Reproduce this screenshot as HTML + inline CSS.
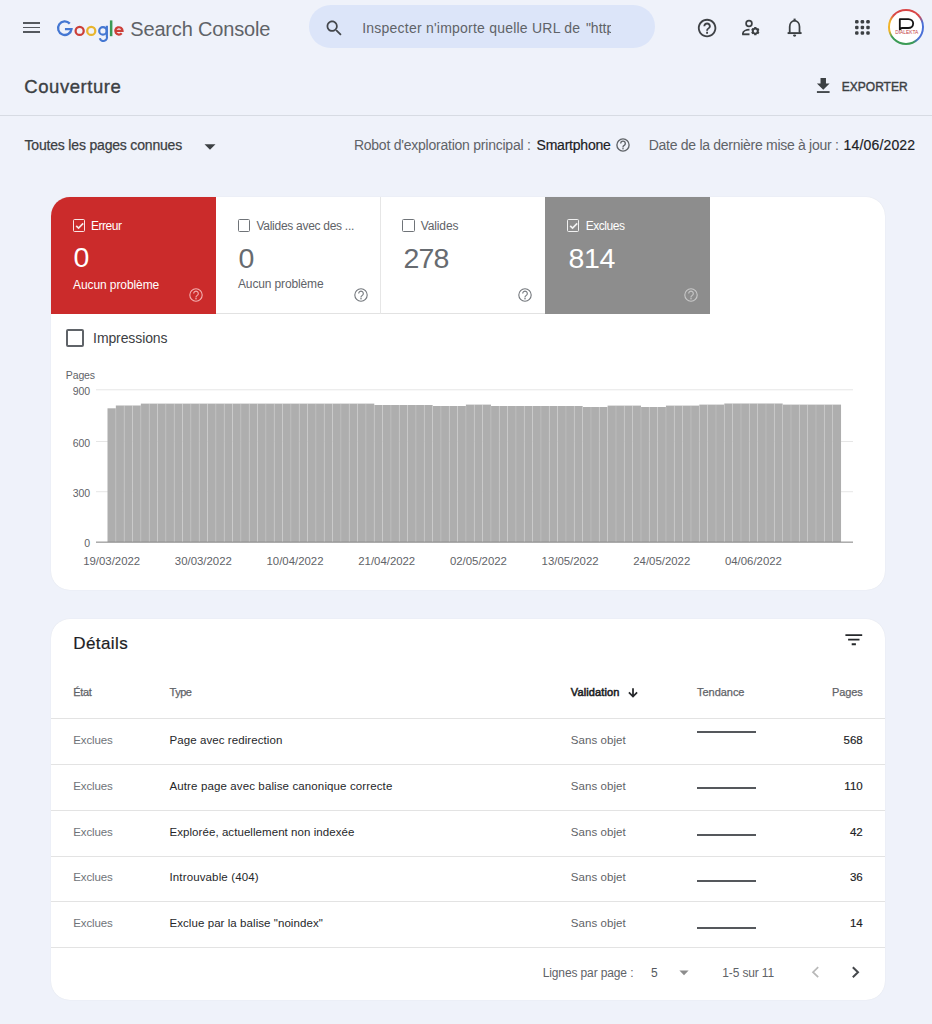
<!DOCTYPE html>
<html><head><meta charset="utf-8"><style>
html,body{margin:0;padding:0;width:932px;height:1024px;overflow:hidden;background:#eff2fa;font-family:"Liberation Sans",sans-serif;}
.a{position:absolute;}
.t{position:absolute;white-space:nowrap;line-height:1;}
.card{background:#fff;border-radius:19px;box-shadow:0 0 1px rgba(60,64,67,0.12);}
</style></head><body>
<!-- header -->
<div class="a" style="left:22.6px;top:22.2px;width:17px;height:1.7px;background:#55595e"></div>
<div class="a" style="left:22.6px;top:26.6px;width:17px;height:1.7px;background:#55595e"></div>
<div class="a" style="left:22.6px;top:31px;width:17px;height:1.7px;background:#55595e"></div>
<svg class="a" style="left:0;top:0" width="130" height="50" viewBox="0 0 130 50" fill="none">
<path d="M69.77 23.63A6.75 6.75 0 1 0 71.50 29.05H64.95" stroke="#4477d2" stroke-width="2.3"/>
<circle cx="79.65" cy="30.9" r="4.05" stroke="#cc3f38" stroke-width="2.25"/>
<circle cx="91.25" cy="30.9" r="4.05" stroke="#e8b52d" stroke-width="2.25"/>
<circle cx="102.95" cy="30.9" r="3.75" stroke="#4477d2" stroke-width="2.2"/>
<path d="M106.85 25.8V36.2A3.4 3.4 0 0 1 99.8 38.3" stroke="#4477d2" stroke-width="2.2"/>
<rect x="109.9" y="20.4" width="2.5" height="15.8" fill="#3a9a55"/>
<path d="M121.70 33.25A3.65 3.65 0 1 1 122.55 30.90H115.25" stroke="#cc3f38" stroke-width="2.2"/>
</svg>
<div class="a" style="left:308.5px;top:5.3px;width:346.5px;height:43px;border-radius:22px;background:#dce5f9"></div>
<svg class="a" style="left:324.2px;top:18.2px" width="20.6" height="20.6" viewBox="0 0 24 24"><path fill="#44474c" d="M15.5 14h-.79l-.28-.27C15.41 12.59 16 11.11 16 9.5 16 5.91 13.09 3 9.5 3S3 5.91 3 9.5 5.91 16 9.5 16c1.61 0 3.09-.59 4.23-1.57l.27.28v.79l5 4.99L20.49 19l-4.99-5zm-6 0C7.01 14 5 11.99 5 9.5S7.01 5 9.5 5 14 7.01 14 9.5 11.99 14 9.5 14z"/></svg>
<svg class="a" style="left:695.9px;top:16.7px" width="22.2" height="22.2" viewBox="0 0 24 24"><path fill="#3f4246" d="M11 18h2v-2h-2v2zm1-16C6.48 2 2 6.48 2 12s4.48 10 10 10 10-4.48 10-10S17.52 2 12 2zm0 18c-4.41 0-8-3.59-8-8s3.59-8 8-8 8 3.59 8 8-3.59 8-8 8zm0-14c-2.21 0-4 1.79-4 4h2c0-1.1.9-2 2-2s2 .9 2 2c0 2-3 1.75-3 5h2c0-2.25 3-2.5 3-5 0-2.21-1.79-4-4-4z"/></svg>
<svg class="a" style="left:740px;top:18px" width="22" height="20" viewBox="0 0 22 20"><circle cx="9" cy="5.5" r="2.9" fill="none" stroke="#3c4043" stroke-width="1.7"/><path d="M2.9 16.4v-1.0c0-2.2 3.4-3.6 6.6-3.7" fill="none" stroke="#3c4043" stroke-width="1.8"/><path d="M2.2 16.3h7.3" stroke="#3c4043" stroke-width="1.9"/><circle cx="15.3" cy="13.1" r="2.5" fill="none" stroke="#3c4043" stroke-width="1.9"/><path d="M15.30 10.70L15.30 9.00M17.38 11.90L18.85 11.05M17.38 14.30L18.85 15.15M15.30 15.50L15.30 17.20M13.22 14.30L11.75 15.15M13.22 11.90L11.75 11.05" stroke="#3c4043" stroke-width="2.3"/></svg>
<svg class="a" style="left:785px;top:17px" width="20" height="22" viewBox="0 0 20 22"><path d="M4.7 15.6V9.8c0-3.3 2.1-5.8 4.9-6.1 2.8.3 4.9 2.8 4.9 6.1v5.8" fill="none" stroke="#3c4043" stroke-width="1.75"/><path d="M2.6 16.1h14" stroke="#3c4043" stroke-width="1.9"/><path d="M3.6 16c.8-.3 1.1-.8 1.1-1.6M15.6 16c-.8-.3-1.1-.8-1.1-1.6" fill="none" stroke="#3c4043" stroke-width="1.2"/><path d="M9.6 1.6v2.4" stroke="#3c4043" stroke-width="2.1"/><ellipse cx="9.6" cy="18.6" rx="1.6" ry="1.05" fill="#3c4043"/></svg>
<svg class="a" style="left:854px;top:19px" width="17" height="17" viewBox="0 0 17 17" fill="#3c4043"><rect x="1.05" y="1.05" width="3.5" height="3.5" rx="1.2"/><rect x="1.05" y="6.65" width="3.5" height="3.5" rx="1.2"/><rect x="1.05" y="12.25" width="3.5" height="3.5" rx="1.2"/><rect x="6.65" y="1.05" width="3.5" height="3.5" rx="1.2"/><rect x="6.65" y="6.65" width="3.5" height="3.5" rx="1.2"/><rect x="6.65" y="12.25" width="3.5" height="3.5" rx="1.2"/><rect x="12.25" y="1.05" width="3.5" height="3.5" rx="1.2"/><rect x="12.25" y="6.65" width="3.5" height="3.5" rx="1.2"/><rect x="12.25" y="12.25" width="3.5" height="3.5" rx="1.2"/></svg>
<div class="a" style="left:887.8px;top:8.8px;width:36.5px;height:36.5px;border-radius:50%;background:conic-gradient(from 0deg,#d94545 0deg,#d94545 50deg,#4a70d8 75deg,#4a70d8 135deg,#3b9b55 155deg,#3b9b55 235deg,#f0b429 255deg,#f0b429 290deg,#d94545 315deg)"></div>
<div class="a" style="left:890.2px;top:11.2px;width:31.7px;height:31.7px;border-radius:50%;background:#fff"></div>
<svg class="a" style="left:887.8px;top:8.8px" width="36.5" height="36.5" viewBox="0 0 38 38">
<path d="M12.3 21.3V10.6h8.8c3.1 0 5.1 2 5.1 4.6s-2 4.6-5.1 4.6h-6.8z" fill="none" stroke="#151515" stroke-width="1.9" stroke-linejoin="round"/>
<text x="7.5" y="26.2" font-size="5.4" font-family="Liberation Sans" fill="#c23c44" textLength="24" lengthAdjust="spacingAndGlyphs">DIALEKTA</text>
</svg>
<svg class="a" style="left:816px;top:77.7px" width="14.5" height="15.4" viewBox="0 0 16 17"><path d="M5 0h6v6h4l-7 7-7-7h4z" fill="#3c4043"/><rect x="1" y="14.5" width="14" height="2" fill="#3c4043"/></svg>
<div class="a" style="left:0;top:114.7px;width:932px;height:1px;background:#d7dbe3"></div>
<svg class="a" style="left:203.5px;top:143.5px" width="12" height="6" viewBox="0 0 12 6"><path d="M0.5 0.3h11L6 5.8z" fill="#3c4043"/></svg>
<svg class="a" style="left:614.6px;top:137.2px" width="16" height="16" viewBox="0 0 16 16"><circle cx="8" cy="8" r="6.1" fill="none" stroke="#5f6368" stroke-width="1.35"/><path d="M5.7 6.4a2.3 2.3 0 1 1 3.5 2c-.7.4-1.2.8-1.2 1.6v.5" fill="none" stroke="#5f6368" stroke-width="1.35"/><circle cx="8" cy="11.7" r=".8" fill="#5f6368"/></svg>
<div class="a card" style="left:51px;top:197px;width:834px;height:393px;overflow:hidden">
<div class="a" style="left:0;top:0;width:165px;height:116.5px;background:#cb2b2b"></div><div class="a" style="left:494px;top:0;width:165px;height:116.5px;background:#8d8d8d"></div><div class="a" style="left:165px;top:116px;width:329px;height:1px;background:#e2e2e2"></div><div class="a" style="left:328.5px;top:0;width:1px;height:116.5px;background:#e6e6e6"></div>
<div class="a" style="left:-51px;top:-197px;width:932px;height:1024px">
<div class="a" style="left:73px;top:219.2px;width:10.40px;height:10.40px;border:1.5px solid rgba(255,255,255,0.88);border-radius:1.5px"></div><svg class="a" style="left:73px;top:219.2px" width="13.4" height="13.4" viewBox="0 0 13 13"><path d="M3.1 6.6l2.3 2.3 4.5-4.7" fill="none" stroke="rgba(255,255,255,0.88)" stroke-width="1.6"/></svg>
<div class="a" style="left:238px;top:219.2px;width:10.40px;height:10.40px;border:1.5px solid #6f7378;border-radius:1.5px"></div>
<div class="a" style="left:402.2px;top:219.3px;width:10.40px;height:10.40px;border:1.5px solid #6f7378;border-radius:1.5px"></div>
<div class="a" style="left:567px;top:219.3px;width:10.40px;height:10.40px;border:1.5px solid rgba(255,255,255,0.88);border-radius:1.5px"></div><svg class="a" style="left:567px;top:219.3px" width="13.4" height="13.4" viewBox="0 0 13 13"><path d="M3.1 6.6l2.3 2.3 4.5-4.7" fill="none" stroke="rgba(255,255,255,0.88)" stroke-width="1.6"/></svg>
<svg class="a" style="left:188px;top:287px" width="16" height="16" viewBox="0 0 16 16"><circle cx="8" cy="8" r="6.2" fill="none" stroke="#f3b1b1" stroke-width="1.1"/><path d="M5.7 6.4a2.3 2.3 0 1 1 3.5 2c-.7.4-1.2.8-1.2 1.6v.5" fill="none" stroke="#f3b1b1" stroke-width="1.1"/><circle cx="8" cy="11.7" r=".8" fill="#f3b1b1"/></svg>
<svg class="a" style="left:352.6px;top:287px" width="16" height="16" viewBox="0 0 16 16"><circle cx="8" cy="8" r="6.2" fill="none" stroke="#73777c" stroke-width="1.1"/><path d="M5.7 6.4a2.3 2.3 0 1 1 3.5 2c-.7.4-1.2.8-1.2 1.6v.5" fill="none" stroke="#73777c" stroke-width="1.1"/><circle cx="8" cy="11.7" r=".8" fill="#73777c"/></svg>
<svg class="a" style="left:517px;top:287px" width="16" height="16" viewBox="0 0 16 16"><circle cx="8" cy="8" r="6.2" fill="none" stroke="#73777c" stroke-width="1.1"/><path d="M5.7 6.4a2.3 2.3 0 1 1 3.5 2c-.7.4-1.2.8-1.2 1.6v.5" fill="none" stroke="#73777c" stroke-width="1.1"/><circle cx="8" cy="11.7" r=".8" fill="#73777c"/></svg>
<svg class="a" style="left:682.5px;top:287px" width="16" height="16" viewBox="0 0 16 16"><circle cx="8" cy="8" r="6.2" fill="none" stroke="#c8c8c8" stroke-width="1.1"/><path d="M5.7 6.4a2.3 2.3 0 1 1 3.5 2c-.7.4-1.2.8-1.2 1.6v.5" fill="none" stroke="#c8c8c8" stroke-width="1.1"/><circle cx="8" cy="11.7" r=".8" fill="#c8c8c8"/></svg>
<div class="a" style="left:66px;top:328.7px;width:14px;height:14px;border:2px solid #5f6368;border-radius:2px"></div>
<svg class="a" style="left:0;top:0" width="932" height="600" viewBox="0 0 932 600">
<rect x="96" y="389.3" width="757" height="1" fill="#e6e6e6"/><rect x="96" y="441.0" width="757" height="1" fill="#e6e6e6"/><rect x="96" y="491.2" width="757" height="1" fill="#e6e6e6"/>
<g fill="#aeaeae"><rect x="107.50" y="408.30" width="8.39" height="133.80"/><rect x="115.84" y="405.50" width="8.39" height="136.60"/><rect x="115.44" y="408.30" width="0.8" height="133.80" fill="#ffffff" fill-opacity="0.22"/><rect x="124.17" y="405.50" width="8.39" height="136.60"/><rect x="123.77" y="405.50" width="0.8" height="136.60" fill="#ffffff" fill-opacity="0.22"/><rect x="132.50" y="405.50" width="8.39" height="136.60"/><rect x="132.10" y="405.50" width="0.8" height="136.60" fill="#ffffff" fill-opacity="0.22"/><rect x="140.84" y="403.60" width="8.39" height="138.50"/><rect x="140.44" y="405.50" width="0.8" height="136.60" fill="#ffffff" fill-opacity="0.22"/><rect x="149.18" y="403.60" width="8.39" height="138.50"/><rect x="148.78" y="403.60" width="0.8" height="138.50" fill="#ffffff" fill-opacity="0.22"/><rect x="157.51" y="403.60" width="8.39" height="138.50"/><rect x="157.11" y="403.60" width="0.8" height="138.50" fill="#ffffff" fill-opacity="0.22"/><rect x="165.84" y="403.60" width="8.39" height="138.50"/><rect x="165.44" y="403.60" width="0.8" height="138.50" fill="#ffffff" fill-opacity="0.22"/><rect x="174.18" y="403.60" width="8.39" height="138.50"/><rect x="173.78" y="403.60" width="0.8" height="138.50" fill="#ffffff" fill-opacity="0.22"/><rect x="182.52" y="403.60" width="8.39" height="138.50"/><rect x="182.12" y="403.60" width="0.8" height="138.50" fill="#ffffff" fill-opacity="0.22"/><rect x="190.85" y="403.60" width="8.39" height="138.50"/><rect x="190.45" y="403.60" width="0.8" height="138.50" fill="#ffffff" fill-opacity="0.22"/><rect x="199.19" y="403.60" width="8.39" height="138.50"/><rect x="198.78" y="403.60" width="0.8" height="138.50" fill="#ffffff" fill-opacity="0.22"/><rect x="207.52" y="403.60" width="8.39" height="138.50"/><rect x="207.12" y="403.60" width="0.8" height="138.50" fill="#ffffff" fill-opacity="0.22"/><rect x="215.86" y="403.60" width="8.39" height="138.50"/><rect x="215.46" y="403.60" width="0.8" height="138.50" fill="#ffffff" fill-opacity="0.22"/><rect x="224.19" y="403.60" width="8.39" height="138.50"/><rect x="223.79" y="403.60" width="0.8" height="138.50" fill="#ffffff" fill-opacity="0.22"/><rect x="232.53" y="403.60" width="8.39" height="138.50"/><rect x="232.12" y="403.60" width="0.8" height="138.50" fill="#ffffff" fill-opacity="0.22"/><rect x="240.86" y="403.60" width="8.39" height="138.50"/><rect x="240.46" y="403.60" width="0.8" height="138.50" fill="#ffffff" fill-opacity="0.22"/><rect x="249.20" y="403.60" width="8.39" height="138.50"/><rect x="248.80" y="403.60" width="0.8" height="138.50" fill="#ffffff" fill-opacity="0.22"/><rect x="257.53" y="403.60" width="8.39" height="138.50"/><rect x="257.13" y="403.60" width="0.8" height="138.50" fill="#ffffff" fill-opacity="0.22"/><rect x="265.87" y="403.60" width="8.39" height="138.50"/><rect x="265.47" y="403.60" width="0.8" height="138.50" fill="#ffffff" fill-opacity="0.22"/><rect x="274.20" y="403.60" width="8.39" height="138.50"/><rect x="273.80" y="403.60" width="0.8" height="138.50" fill="#ffffff" fill-opacity="0.22"/><rect x="282.54" y="403.60" width="8.39" height="138.50"/><rect x="282.14" y="403.60" width="0.8" height="138.50" fill="#ffffff" fill-opacity="0.22"/><rect x="290.87" y="403.60" width="8.39" height="138.50"/><rect x="290.47" y="403.60" width="0.8" height="138.50" fill="#ffffff" fill-opacity="0.22"/><rect x="299.21" y="403.60" width="8.39" height="138.50"/><rect x="298.81" y="403.60" width="0.8" height="138.50" fill="#ffffff" fill-opacity="0.22"/><rect x="307.54" y="403.60" width="8.39" height="138.50"/><rect x="307.14" y="403.60" width="0.8" height="138.50" fill="#ffffff" fill-opacity="0.22"/><rect x="315.88" y="403.60" width="8.39" height="138.50"/><rect x="315.48" y="403.60" width="0.8" height="138.50" fill="#ffffff" fill-opacity="0.22"/><rect x="324.21" y="403.60" width="8.39" height="138.50"/><rect x="323.81" y="403.60" width="0.8" height="138.50" fill="#ffffff" fill-opacity="0.22"/><rect x="332.55" y="403.60" width="8.39" height="138.50"/><rect x="332.15" y="403.60" width="0.8" height="138.50" fill="#ffffff" fill-opacity="0.22"/><rect x="340.88" y="403.60" width="8.39" height="138.50"/><rect x="340.48" y="403.60" width="0.8" height="138.50" fill="#ffffff" fill-opacity="0.22"/><rect x="349.22" y="403.60" width="8.39" height="138.50"/><rect x="348.82" y="403.60" width="0.8" height="138.50" fill="#ffffff" fill-opacity="0.22"/><rect x="357.55" y="403.60" width="8.39" height="138.50"/><rect x="357.15" y="403.60" width="0.8" height="138.50" fill="#ffffff" fill-opacity="0.22"/><rect x="365.89" y="403.60" width="8.39" height="138.50"/><rect x="365.49" y="403.60" width="0.8" height="138.50" fill="#ffffff" fill-opacity="0.22"/><rect x="374.22" y="405.00" width="8.39" height="137.10"/><rect x="373.82" y="405.00" width="0.8" height="137.10" fill="#ffffff" fill-opacity="0.22"/><rect x="382.56" y="405.00" width="8.39" height="137.10"/><rect x="382.16" y="405.00" width="0.8" height="137.10" fill="#ffffff" fill-opacity="0.22"/><rect x="390.89" y="405.00" width="8.39" height="137.10"/><rect x="390.49" y="405.00" width="0.8" height="137.10" fill="#ffffff" fill-opacity="0.22"/><rect x="399.23" y="405.00" width="8.39" height="137.10"/><rect x="398.83" y="405.00" width="0.8" height="137.10" fill="#ffffff" fill-opacity="0.22"/><rect x="407.56" y="405.00" width="8.39" height="137.10"/><rect x="407.16" y="405.00" width="0.8" height="137.10" fill="#ffffff" fill-opacity="0.22"/><rect x="415.90" y="405.00" width="8.39" height="137.10"/><rect x="415.50" y="405.00" width="0.8" height="137.10" fill="#ffffff" fill-opacity="0.22"/><rect x="424.23" y="405.00" width="8.39" height="137.10"/><rect x="423.83" y="405.00" width="0.8" height="137.10" fill="#ffffff" fill-opacity="0.22"/><rect x="432.57" y="406.00" width="8.39" height="136.10"/><rect x="432.17" y="406.00" width="0.8" height="136.10" fill="#ffffff" fill-opacity="0.22"/><rect x="440.90" y="406.00" width="8.39" height="136.10"/><rect x="440.50" y="406.00" width="0.8" height="136.10" fill="#ffffff" fill-opacity="0.22"/><rect x="449.24" y="406.00" width="8.39" height="136.10"/><rect x="448.84" y="406.00" width="0.8" height="136.10" fill="#ffffff" fill-opacity="0.22"/><rect x="457.57" y="406.00" width="8.39" height="136.10"/><rect x="457.17" y="406.00" width="0.8" height="136.10" fill="#ffffff" fill-opacity="0.22"/><rect x="465.91" y="404.60" width="8.39" height="137.50"/><rect x="465.51" y="406.00" width="0.8" height="136.10" fill="#ffffff" fill-opacity="0.22"/><rect x="474.24" y="404.60" width="8.39" height="137.50"/><rect x="473.84" y="404.60" width="0.8" height="137.50" fill="#ffffff" fill-opacity="0.22"/><rect x="482.58" y="404.60" width="8.39" height="137.50"/><rect x="482.18" y="404.60" width="0.8" height="137.50" fill="#ffffff" fill-opacity="0.22"/><rect x="490.91" y="406.00" width="8.39" height="136.10"/><rect x="490.51" y="406.00" width="0.8" height="136.10" fill="#ffffff" fill-opacity="0.22"/><rect x="499.25" y="406.00" width="8.39" height="136.10"/><rect x="498.85" y="406.00" width="0.8" height="136.10" fill="#ffffff" fill-opacity="0.22"/><rect x="507.58" y="406.00" width="8.39" height="136.10"/><rect x="507.18" y="406.00" width="0.8" height="136.10" fill="#ffffff" fill-opacity="0.22"/><rect x="515.91" y="406.00" width="8.39" height="136.10"/><rect x="515.51" y="406.00" width="0.8" height="136.10" fill="#ffffff" fill-opacity="0.22"/><rect x="524.25" y="406.00" width="8.39" height="136.10"/><rect x="523.85" y="406.00" width="0.8" height="136.10" fill="#ffffff" fill-opacity="0.22"/><rect x="532.59" y="406.00" width="8.39" height="136.10"/><rect x="532.19" y="406.00" width="0.8" height="136.10" fill="#ffffff" fill-opacity="0.22"/><rect x="540.92" y="406.00" width="8.39" height="136.10"/><rect x="540.52" y="406.00" width="0.8" height="136.10" fill="#ffffff" fill-opacity="0.22"/><rect x="549.26" y="406.00" width="8.39" height="136.10"/><rect x="548.86" y="406.00" width="0.8" height="136.10" fill="#ffffff" fill-opacity="0.22"/><rect x="557.59" y="406.00" width="8.39" height="136.10"/><rect x="557.19" y="406.00" width="0.8" height="136.10" fill="#ffffff" fill-opacity="0.22"/><rect x="565.93" y="406.00" width="8.39" height="136.10"/><rect x="565.53" y="406.00" width="0.8" height="136.10" fill="#ffffff" fill-opacity="0.22"/><rect x="574.26" y="406.00" width="8.39" height="136.10"/><rect x="573.86" y="406.00" width="0.8" height="136.10" fill="#ffffff" fill-opacity="0.22"/><rect x="582.60" y="407.00" width="8.39" height="135.10"/><rect x="582.20" y="407.00" width="0.8" height="135.10" fill="#ffffff" fill-opacity="0.22"/><rect x="590.93" y="407.00" width="8.39" height="135.10"/><rect x="590.53" y="407.00" width="0.8" height="135.10" fill="#ffffff" fill-opacity="0.22"/><rect x="599.27" y="407.00" width="8.39" height="135.10"/><rect x="598.87" y="407.00" width="0.8" height="135.10" fill="#ffffff" fill-opacity="0.22"/><rect x="607.60" y="405.60" width="8.39" height="136.50"/><rect x="607.20" y="407.00" width="0.8" height="135.10" fill="#ffffff" fill-opacity="0.22"/><rect x="615.94" y="405.60" width="8.39" height="136.50"/><rect x="615.54" y="405.60" width="0.8" height="136.50" fill="#ffffff" fill-opacity="0.22"/><rect x="624.27" y="405.60" width="8.39" height="136.50"/><rect x="623.87" y="405.60" width="0.8" height="136.50" fill="#ffffff" fill-opacity="0.22"/><rect x="632.61" y="405.60" width="8.39" height="136.50"/><rect x="632.21" y="405.60" width="0.8" height="136.50" fill="#ffffff" fill-opacity="0.22"/><rect x="640.94" y="407.00" width="8.39" height="135.10"/><rect x="640.54" y="407.00" width="0.8" height="135.10" fill="#ffffff" fill-opacity="0.22"/><rect x="649.28" y="407.00" width="8.39" height="135.10"/><rect x="648.88" y="407.00" width="0.8" height="135.10" fill="#ffffff" fill-opacity="0.22"/><rect x="657.61" y="407.00" width="8.39" height="135.10"/><rect x="657.21" y="407.00" width="0.8" height="135.10" fill="#ffffff" fill-opacity="0.22"/><rect x="665.95" y="405.60" width="8.39" height="136.50"/><rect x="665.55" y="407.00" width="0.8" height="135.10" fill="#ffffff" fill-opacity="0.22"/><rect x="674.28" y="405.60" width="8.39" height="136.50"/><rect x="673.88" y="405.60" width="0.8" height="136.50" fill="#ffffff" fill-opacity="0.22"/><rect x="682.62" y="405.60" width="8.39" height="136.50"/><rect x="682.22" y="405.60" width="0.8" height="136.50" fill="#ffffff" fill-opacity="0.22"/><rect x="690.95" y="405.60" width="8.39" height="136.50"/><rect x="690.55" y="405.60" width="0.8" height="136.50" fill="#ffffff" fill-opacity="0.22"/><rect x="699.29" y="404.60" width="8.39" height="137.50"/><rect x="698.89" y="405.60" width="0.8" height="136.50" fill="#ffffff" fill-opacity="0.22"/><rect x="707.62" y="404.60" width="8.39" height="137.50"/><rect x="707.22" y="404.60" width="0.8" height="137.50" fill="#ffffff" fill-opacity="0.22"/><rect x="715.96" y="404.60" width="8.39" height="137.50"/><rect x="715.56" y="404.60" width="0.8" height="137.50" fill="#ffffff" fill-opacity="0.22"/><rect x="724.29" y="403.50" width="8.39" height="138.60"/><rect x="723.89" y="404.60" width="0.8" height="137.50" fill="#ffffff" fill-opacity="0.22"/><rect x="732.63" y="403.50" width="8.39" height="138.60"/><rect x="732.23" y="403.50" width="0.8" height="138.60" fill="#ffffff" fill-opacity="0.22"/><rect x="740.96" y="403.50" width="8.39" height="138.60"/><rect x="740.56" y="403.50" width="0.8" height="138.60" fill="#ffffff" fill-opacity="0.22"/><rect x="749.30" y="403.50" width="8.39" height="138.60"/><rect x="748.90" y="403.50" width="0.8" height="138.60" fill="#ffffff" fill-opacity="0.22"/><rect x="757.63" y="403.50" width="8.39" height="138.60"/><rect x="757.23" y="403.50" width="0.8" height="138.60" fill="#ffffff" fill-opacity="0.22"/><rect x="765.97" y="403.50" width="8.39" height="138.60"/><rect x="765.57" y="403.50" width="0.8" height="138.60" fill="#ffffff" fill-opacity="0.22"/><rect x="774.30" y="403.50" width="8.39" height="138.60"/><rect x="773.90" y="403.50" width="0.8" height="138.60" fill="#ffffff" fill-opacity="0.22"/><rect x="782.64" y="404.60" width="8.39" height="137.50"/><rect x="782.24" y="404.60" width="0.8" height="137.50" fill="#ffffff" fill-opacity="0.22"/><rect x="790.97" y="404.60" width="8.39" height="137.50"/><rect x="790.57" y="404.60" width="0.8" height="137.50" fill="#ffffff" fill-opacity="0.22"/><rect x="799.31" y="404.60" width="8.39" height="137.50"/><rect x="798.91" y="404.60" width="0.8" height="137.50" fill="#ffffff" fill-opacity="0.22"/><rect x="807.64" y="404.60" width="8.39" height="137.50"/><rect x="807.24" y="404.60" width="0.8" height="137.50" fill="#ffffff" fill-opacity="0.22"/><rect x="815.98" y="404.60" width="8.39" height="137.50"/><rect x="815.58" y="404.60" width="0.8" height="137.50" fill="#ffffff" fill-opacity="0.22"/><rect x="824.31" y="404.60" width="8.39" height="137.50"/><rect x="823.91" y="404.60" width="0.8" height="137.50" fill="#ffffff" fill-opacity="0.22"/><rect x="832.65" y="404.60" width="8.39" height="137.50"/><rect x="832.25" y="404.60" width="0.8" height="137.50" fill="#ffffff" fill-opacity="0.22"/></g>
<rect x="96" y="541.6" width="757" height="1.1" fill="#8a8a8a"/>
</svg>
</div>
</div><div class="a card" style="left:51px;top:619px;width:834px;height:381px"></div>
<div class="a" style="left:51px;top:718.0px;width:834px;height:1px;background:#e3e3e3"></div><div class="a" style="left:51px;top:764.0px;width:834px;height:1px;background:#e3e3e3"></div><div class="a" style="left:51px;top:809.9px;width:834px;height:1px;background:#e3e3e3"></div><div class="a" style="left:51px;top:855.6px;width:834px;height:1px;background:#e3e3e3"></div><div class="a" style="left:51px;top:901.3px;width:834px;height:1px;background:#e3e3e3"></div><div class="a" style="left:51px;top:947.0px;width:834px;height:1px;background:#e3e3e3"></div><div class="a" style="left:696.8px;top:731px;width:58.8px;height:2px;background:#55585c"></div><div class="a" style="left:696.8px;top:787px;width:58.8px;height:2px;background:#55585c"></div><div class="a" style="left:696.8px;top:834px;width:58.8px;height:2px;background:#55585c"></div><div class="a" style="left:696.8px;top:880px;width:58.8px;height:2px;background:#55585c"></div><div class="a" style="left:696.8px;top:927px;width:58.8px;height:2px;background:#55585c"></div>
<svg class="a" style="left:845px;top:633px" width="19" height="13" viewBox="0 0 19 13"><path d="M0.4 2.1h16.8M3.1 6.6h11.4M6.7 11.2h4.2" stroke="#26282b" stroke-width="1.9"/></svg>
<svg class="a" style="left:627px;top:686px" width="12" height="12" viewBox="0 0 12 12"><path d="M6 2.2v8.2M1.9 6.4L6 10.5l4.1-4.1" fill="none" stroke="#26282b" stroke-width="1.75"/></svg>
<svg class="a" style="left:677.5px;top:969.5px" width="12" height="6" viewBox="0 0 12 6"><path d="M1.4 0.5h9.2L6 5.2z" fill="#8c8c8c"/></svg>
<svg class="a" style="left:809px;top:965px" width="12" height="14" viewBox="0 0 12 14"><path d="M9.2 2.2L4 7.2l5.2 5" fill="none" stroke="#b8b8b8" stroke-width="1.7"/></svg>
<svg class="a" style="left:850px;top:965px" width="12" height="14" viewBox="0 0 12 14"><path d="M2.8 2.2L8 7.2l-5.2 5" fill="none" stroke="#45484c" stroke-width="2"/></svg>

<div class="t" id="t0" style="top:18.57px;font-size:20px;color:#5f6368;font-weight:400;letter-spacing:-0.178px;left:130.30px;">Search Console</div>
<div class="t" id="t1" style="top:20.95px;font-size:14px;color:#5f6368;font-weight:400;letter-spacing:0.224px;left:362.20px;">Inspecter n'importe quelle URL de</div>
<div class="t" id="t2" style="top:20.95px;font-size:14px;color:#5f6368;font-weight:400;letter-spacing:0.000px;left:585.90px;width:25px;overflow:hidden;">"http</div>
<div class="t" id="t3" style="top:77.64px;font-size:18.5px;color:#3c4043;font-weight:400;letter-spacing:0.554px;-webkit-text-stroke:0.35px #3c4043;left:24.30px;">Couverture</div>
<div class="t" id="t4" style="top:81.14px;font-size:12px;color:#3c4043;font-weight:400;letter-spacing:0.000px;-webkit-text-stroke:0.4px #3c4043;left:841.80px;">EXPORTER</div>
<div class="t" id="t5" style="top:137.95px;font-size:14px;color:#3c4043;font-weight:400;letter-spacing:-0.182px;-webkit-text-stroke:0.25px #3c4043;left:24.50px;">Toutes les pages connues</div>
<div class="t" id="t6" style="top:220.14px;font-size:12px;color:#ffffff;font-weight:400;letter-spacing:-0.469px;left:91.00px;">Erreur</div>
<div class="t" id="t7" style="top:219.94px;font-size:12px;color:#5f6368;font-weight:400;letter-spacing:-0.283px;left:256.50px;">Valides avec des ...</div>
<div class="t" id="t8" style="top:219.74px;font-size:12px;color:#5f6368;font-weight:400;letter-spacing:-0.111px;left:420.70px;">Valides</div>
<div class="t" id="t9" style="top:219.74px;font-size:12px;color:#ffffff;font-weight:400;letter-spacing:-0.455px;left:585.70px;">Exclues</div>
<div class="t" id="t10" style="top:243.47px;font-size:28.5px;color:#ffffff;font-weight:400;letter-spacing:0.000px;left:73.60px;">0</div>
<div class="t" id="t11" style="top:244.17px;font-size:28.5px;color:#676b70;font-weight:400;letter-spacing:0.000px;left:238.50px;">0</div>
<div class="t" id="t12" style="top:243.77px;font-size:28.5px;color:#676b70;font-weight:400;letter-spacing:-0.831px;left:403.50px;">278</div>
<div class="t" id="t13" style="top:243.77px;font-size:28.5px;color:#ffffff;font-weight:400;letter-spacing:-0.381px;left:568.50px;">814</div>
<div class="t" id="t14" style="top:278.84px;font-size:12px;color:#ffffff;font-weight:400;letter-spacing:-0.084px;left:73.00px;">Aucun problème</div>
<div class="t" id="t15" style="top:278.44px;font-size:12px;color:#5f6368;font-weight:400;letter-spacing:-0.138px;left:238.00px;">Aucun problème</div>
<div class="t" id="t16" style="top:330.55px;font-size:14px;color:#3c4043;font-weight:400;letter-spacing:-0.107px;left:93.10px;">Impressions</div>
<div class="t" id="t17" style="top:369.71px;font-size:10.5px;color:#5f6368;font-weight:400;letter-spacing:-0.120px;left:65.80px;">Pages</div>
<div class="t" id="t18" style="top:385.81px;font-size:10.5px;color:#5f6368;font-weight:400;letter-spacing:0.000px;left:72.67px;">900</div>
<div class="t" id="t19" style="top:437.51px;font-size:10.5px;color:#5f6368;font-weight:400;letter-spacing:0.000px;left:72.67px;">600</div>
<div class="t" id="t20" style="top:487.71px;font-size:10.5px;color:#5f6368;font-weight:400;letter-spacing:0.000px;left:72.67px;">300</div>
<div class="t" id="t21" style="top:538.11px;font-size:10.5px;color:#5f6368;font-weight:400;letter-spacing:0.000px;left:84.36px;">0</div>
<div class="t" id="t22" style="top:555.85px;font-size:11.4px;color:#5f6368;font-weight:400;letter-spacing:-0.002px;left:83.17px;">19/03/2022</div>
<div class="t" id="t23" style="top:555.85px;font-size:11.4px;color:#5f6368;font-weight:400;letter-spacing:-0.002px;left:174.85px;">30/03/2022</div>
<div class="t" id="t24" style="top:555.85px;font-size:11.4px;color:#5f6368;font-weight:400;letter-spacing:-0.002px;left:266.54px;">10/04/2022</div>
<div class="t" id="t25" style="top:555.85px;font-size:11.4px;color:#5f6368;font-weight:400;letter-spacing:-0.002px;left:358.22px;">21/04/2022</div>
<div class="t" id="t26" style="top:555.85px;font-size:11.4px;color:#5f6368;font-weight:400;letter-spacing:-0.002px;left:449.91px;">02/05/2022</div>
<div class="t" id="t27" style="top:555.85px;font-size:11.4px;color:#5f6368;font-weight:400;letter-spacing:-0.002px;left:541.59px;">13/05/2022</div>
<div class="t" id="t28" style="top:555.85px;font-size:11.4px;color:#5f6368;font-weight:400;letter-spacing:-0.002px;left:633.28px;">24/05/2022</div>
<div class="t" id="t29" style="top:555.85px;font-size:11.4px;color:#5f6368;font-weight:400;letter-spacing:-0.002px;left:724.96px;">04/06/2022</div>
<div class="t" id="t30" style="top:634.91px;font-size:17px;color:#202124;font-weight:400;letter-spacing:0.422px;-webkit-text-stroke:0.2px #202124;left:73.20px;">Détails</div>
<div class="t" id="t31" style="top:687.19px;font-size:11px;color:#5f6368;font-weight:400;letter-spacing:-0.326px;-webkit-text-stroke:0.25px #5f6368;left:73.20px;">État</div>
<div class="t" id="t32" style="top:687.19px;font-size:11px;color:#5f6368;font-weight:400;letter-spacing:-0.453px;-webkit-text-stroke:0.25px #5f6368;left:169.50px;">Type</div>
<div class="t" id="t33" style="top:687.19px;font-size:11px;color:#202124;font-weight:400;letter-spacing:0.111px;-webkit-text-stroke:0.55px #202124;left:570.80px;">Validation</div>
<div class="t" id="t34" style="top:687.19px;font-size:11px;color:#5f6368;font-weight:400;letter-spacing:-0.031px;-webkit-text-stroke:0.25px #5f6368;left:697.00px;">Tendance</div>
<div class="t" id="t35" style="top:687.19px;font-size:11px;color:#5f6368;font-weight:400;letter-spacing:-0.126px;-webkit-text-stroke:0.25px #5f6368;left:832.00px;">Pages</div>
<div class="t" id="t36" style="top:734.77px;font-size:11.5px;color:#6f7378;font-weight:400;letter-spacing:-0.114px;left:73.20px;">Exclues</div>
<div class="t" id="t37" style="top:734.77px;font-size:11.5px;color:#26272a;font-weight:400;letter-spacing:0.078px;left:169.50px;">Page avec redirection</div>
<div class="t" id="t38" style="top:734.77px;font-size:11.5px;color:#5f6368;font-weight:400;letter-spacing:0.071px;left:570.80px;">Sans objet</div>
<div class="t" id="t39" style="top:734.77px;font-size:11.5px;color:#202124;font-weight:400;letter-spacing:0.000px;-webkit-text-stroke:0.15px #202124;left:843.51px;">568</div>
<div class="t" id="t40" style="top:780.77px;font-size:11.5px;color:#6f7378;font-weight:400;letter-spacing:-0.114px;left:73.20px;">Exclues</div>
<div class="t" id="t41" style="top:780.77px;font-size:11.5px;color:#26272a;font-weight:400;letter-spacing:0.120px;left:169.50px;">Autre page avec balise canonique correcte</div>
<div class="t" id="t42" style="top:780.77px;font-size:11.5px;color:#5f6368;font-weight:400;letter-spacing:0.071px;left:570.80px;">Sans objet</div>
<div class="t" id="t43" style="top:780.77px;font-size:11.5px;color:#202124;font-weight:400;letter-spacing:0.000px;-webkit-text-stroke:0.15px #202124;left:844.36px;">110</div>
<div class="t" id="t44" style="top:826.67px;font-size:11.5px;color:#6f7378;font-weight:400;letter-spacing:-0.114px;left:73.20px;">Exclues</div>
<div class="t" id="t45" style="top:826.67px;font-size:11.5px;color:#26272a;font-weight:400;letter-spacing:0.062px;left:169.50px;">Explorée, actuellement non indexée</div>
<div class="t" id="t46" style="top:826.67px;font-size:11.5px;color:#5f6368;font-weight:400;letter-spacing:0.071px;left:570.80px;">Sans objet</div>
<div class="t" id="t47" style="top:826.67px;font-size:11.5px;color:#202124;font-weight:400;letter-spacing:0.000px;-webkit-text-stroke:0.15px #202124;left:849.90px;">42</div>
<div class="t" id="t48" style="top:872.37px;font-size:11.5px;color:#6f7378;font-weight:400;letter-spacing:-0.114px;left:73.20px;">Exclues</div>
<div class="t" id="t49" style="top:872.37px;font-size:11.5px;color:#26272a;font-weight:400;letter-spacing:0.134px;left:169.50px;">Introuvable (404)</div>
<div class="t" id="t50" style="top:872.37px;font-size:11.5px;color:#5f6368;font-weight:400;letter-spacing:0.071px;left:570.80px;">Sans objet</div>
<div class="t" id="t51" style="top:872.37px;font-size:11.5px;color:#202124;font-weight:400;letter-spacing:0.000px;-webkit-text-stroke:0.15px #202124;left:849.90px;">36</div>
<div class="t" id="t52" style="top:918.07px;font-size:11.5px;color:#6f7378;font-weight:400;letter-spacing:-0.114px;left:73.20px;">Exclues</div>
<div class="t" id="t53" style="top:918.07px;font-size:11.5px;color:#26272a;font-weight:400;letter-spacing:0.066px;left:169.50px;">Exclue par la balise "noindex"</div>
<div class="t" id="t54" style="top:918.07px;font-size:11.5px;color:#5f6368;font-weight:400;letter-spacing:0.071px;left:570.80px;">Sans objet</div>
<div class="t" id="t55" style="top:918.07px;font-size:11.5px;color:#202124;font-weight:400;letter-spacing:0.000px;-webkit-text-stroke:0.15px #202124;left:849.90px;">14</div>
<div class="t" id="t56" style="top:967.34px;font-size:12px;color:#5f6368;font-weight:400;letter-spacing:-0.122px;left:542.70px;">Lignes par page :</div>
<div class="t" id="t57" style="top:967.34px;font-size:12px;color:#55595e;font-weight:400;letter-spacing:0.000px;left:650.90px;">5</div>
<div class="t" id="t58" style="top:967.34px;font-size:12px;color:#5f6368;font-weight:400;letter-spacing:-0.149px;left:722.30px;">1-5 sur 11</div>
<div class="t" id="t59" style="top:137.95px;font-size:14px;color:#5f6368;font-weight:400;letter-spacing:-0.234px;left:353.90px;">Robot d'exploration principal :</div>
<div class="t" id="t60" style="top:137.95px;font-size:14px;color:#202124;font-weight:400;letter-spacing:-0.209px;-webkit-text-stroke:0.18px #202124;left:536.50px;">Smartphone</div>
<div class="t" id="t61" style="top:137.95px;font-size:14px;color:#5f6368;font-weight:400;letter-spacing:-0.288px;left:648.80px;">Date de la dernière mise à jour :</div>
<div class="t" id="t62" style="top:137.95px;font-size:14px;color:#202124;font-weight:400;letter-spacing:0.158px;-webkit-text-stroke:0.18px #202124;left:843.60px;">14/06/2022</div>
</body></html>
